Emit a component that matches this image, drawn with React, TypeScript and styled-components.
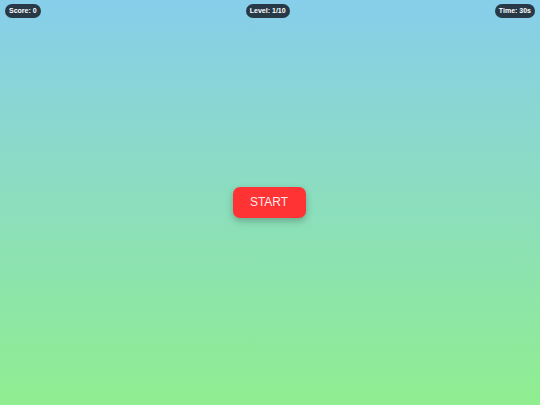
import React from "react";
import styled, { createGlobalStyle } from "styled-components";

const Global = createGlobalStyle`
  html, body { margin: 0; padding: 0; }
  body { font-family: "Liberation Sans", Arial, sans-serif; }
`;

const Screen = styled.div`
  width: 540px;
  height: 405px;
  background: linear-gradient(to bottom, #87ceeb, #90ee90);
  display: flex;
  flex-direction: column;
  overflow: hidden;
`;

const TopBar = styled.div`
  display: flex;
  justify-content: space-between;
  align-items: center;
  padding: 4px 5px 0 5px;
`;

const Badge = styled.div`
  background: rgba(30, 45, 55, 0.92);
  color: #ffffff;
  font-size: 7px;
  font-weight: bold;
  line-height: 14px;
  height: 14px;
  padding: 0 4px;
  border-radius: 7px;
  white-space: nowrap;
`;

const Stage = styled.div`
  flex: 1;
  display: flex;
  align-items: center;
  justify-content: center;
  padding-bottom: 19px;
  padding-right: 2px;
`;

const StartButton = styled.button`
  width: 73px;
  height: 31px;
  border: none;
  border-radius: 7px;
  background: #ff3333;
  color: rgba(255, 255, 255, 0.92);
  font-family: "Liberation Sans", Arial, sans-serif;
  font-size: 12px;
  box-shadow: 0 3px 7px rgba(0, 0, 0, 0.25);
  cursor: pointer;
  padding: 0;
`;

export default function App() {
  return (
    <>
      <Global />
      <Screen>
        <TopBar>
          <Badge>Score: 0</Badge>
          <Badge>Level: 1/10</Badge>
          <Badge>Time: 30s</Badge>
        </TopBar>
        <Stage>
          <StartButton>START</StartButton>
        </Stage>
      </Screen>
    </>
  );
}
